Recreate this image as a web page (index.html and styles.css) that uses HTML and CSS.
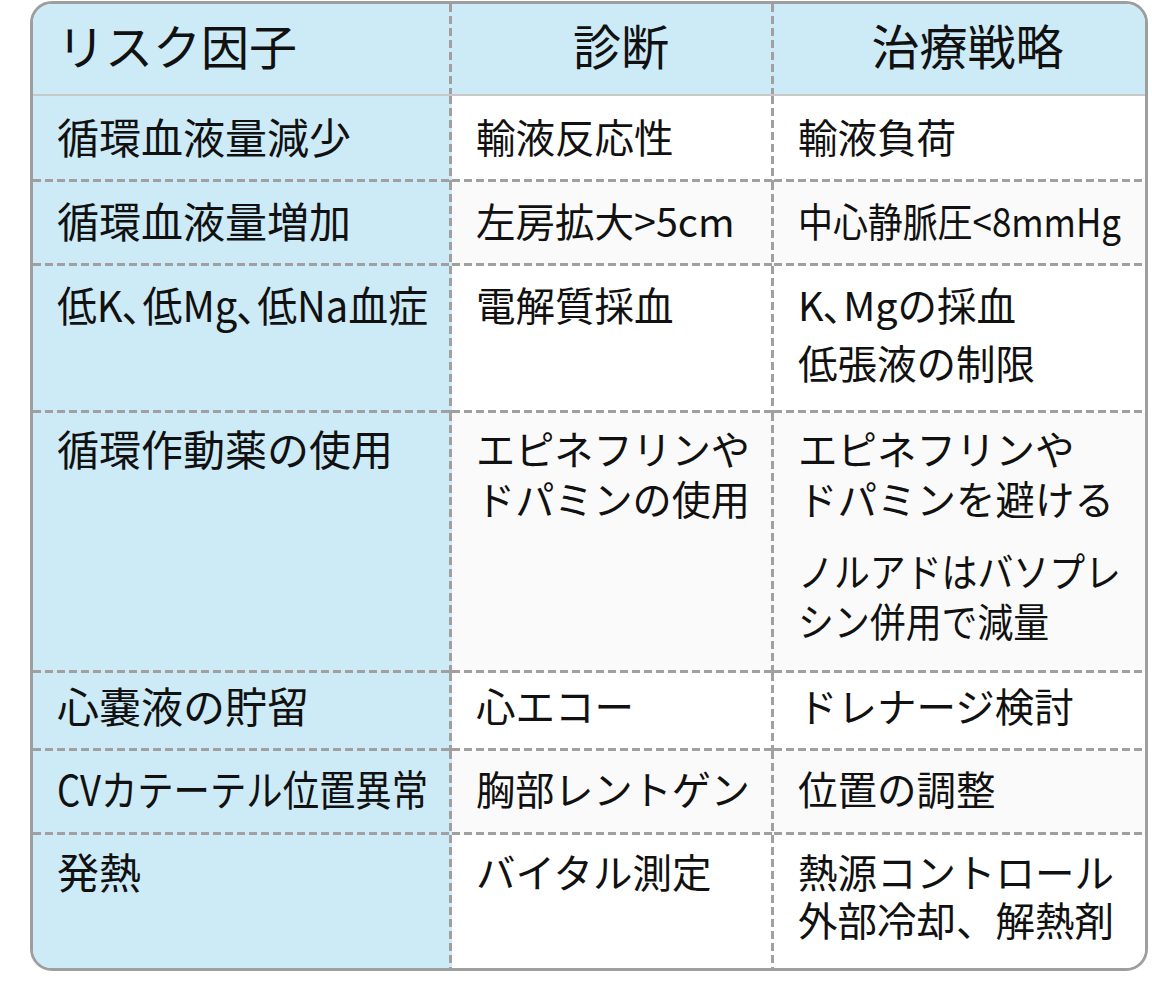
FILE: index.html
```html
<!DOCTYPE html>
<html lang="ja">
<head>
<meta charset="utf-8">
<title>リスク因子</title>
<link rel="stylesheet" href="styles.css">
</head>
<body>
<div class="grid" role="table">
  <div class="row head" role="row">
    <div class="cell c1"><p>リスク因子</p></div>
    <div class="cell c2"><p>診断</p></div>
    <div class="cell c3"><p>治療戦略</p></div>
  </div>
  <div class="row body r1" role="row">
    <div class="cell c1"><p><span class="line">循環血液量減少</span></p></div>
    <div class="cell c2"><p><span class="line">輸液反応性</span></p></div>
    <div class="cell c3"><p><span class="line">輸液負荷</span></p></div>
  </div>
  <div class="row body r2 alt" role="row">
    <div class="cell c1"><p><span class="line">循環血液量増加</span></p></div>
    <div class="cell c2"><p><span class="line">左房拡大&gt;5cm</span></p></div>
    <div class="cell c3"><p><span class="line">中心静脈圧&lt;8mmHg</span></p></div>
  </div>
  <div class="row body r3" role="row">
    <div class="cell c1"><p><span class="line">低K､低Mg､低Na血症</span></p></div>
    <div class="cell c2"><p><span class="line">電解質採血</span></p></div>
    <div class="cell c3"><p><span class="line">K､Mgの採血</span></p><p class="next"><span class="line">低張液の制限</span></p></div>
  </div>
  <div class="row body r4 alt" role="row">
    <div class="cell c1"><p><span class="line">循環作動薬の使用</span></p></div>
    <div class="cell c2"><p><span class="line">エピネフリンや</span><span class="line">ドパミンの使用</span></p></div>
    <div class="cell c3"><p><span class="line">エピネフリンや</span><span class="line">ドパミンを避ける</span></p><p class="next"><span class="line">ノルアドはバソプレ</span><span class="line">シン併用で減量</span></p></div>
  </div>
  <div class="row body r5" role="row">
    <div class="cell c1"><p><span class="line">心嚢液の貯留</span></p></div>
    <div class="cell c2"><p><span class="line">心エコー</span></p></div>
    <div class="cell c3"><p><span class="line">ドレナージ検討</span></p></div>
  </div>
  <div class="row body r6 alt" role="row">
    <div class="cell c1"><p><span class="line">CVカテーテル位置異常</span></p></div>
    <div class="cell c2"><p><span class="line">胸部レントゲン</span></p></div>
    <div class="cell c3"><p><span class="line">位置の調整</span></p></div>
  </div>
  <div class="row body r7" role="row">
    <div class="cell c1"><p><span class="line">発熱</span></p></div>
    <div class="cell c2"><p><span class="line">バイタル測定</span></p></div>
    <div class="cell c3"><p><span class="line">熱源コントロール</span><span class="line">外部冷却、解熱剤</span></p></div>
  </div>
</div>
<script src="fit.js"></script>
</body>
</html>
```

FILE: fit.js
```js
(function () {
  function fit() {
    document.querySelectorAll('.cell p').forEach(function (p) {
      var lines = p.querySelectorAll('.line');
      if (!lines.length) return;
      var cell = p.closest('.cell');
      var cs = getComputedStyle(cell);
      var max = cell.clientWidth - parseFloat(cs.paddingLeft) - parseFloat(cs.paddingRight);
      var widest = 0;
      lines.forEach(function (l) {
        l.style.transform = '';
        widest = Math.max(widest, l.getBoundingClientRect().width);
      });
      if (widest > max) {
        var s = max / widest;
        lines.forEach(function (l) {
          l.style.transform = 'scaleX(' + s.toFixed(4) + ')';
        });
      }
    });
  }
  fit();
  if (document.fonts && document.fonts.ready) {
    document.fonts.ready.then(fit);
  }
})();
```

FILE: styles.css
```css
html, body {
  margin: 0;
  background: #ffffff;
}

body {
  padding: 1px 0 0 30px;
  font-family: "Noto Sans CJK JP", "Noto Sans", sans-serif;
  color: #111111;
}

.grid {
  width: 1118px;
  box-sizing: border-box;
  border: 3px solid #9e9e9e;
  border-radius: 22px;
  overflow: hidden;
  display: grid;
  grid-template-columns: 419px 322px 371px;
  grid-template-rows: 92px 86px 84px 147px 260px 78px 84px 133px;
}

.row {
  display: contents;
}

.cell {
  --bg: #ffffff;
  --bd-r: none;
  --bd-b: none;
  box-sizing: border-box;
  padding: 0 24px;
  font-size: 39.5px;
  line-height: 50px;
  white-space: nowrap;
  background: var(--bd-b), var(--bd-r), var(--bg);
}

.cell p {
  margin: 0;
}

.line {
  display: block;
  width: max-content;
  transform-origin: 0 50%;
}

.c1,
.c2 {
  --bd-r: linear-gradient(#a0a0a0 8px, transparent 8px) right top / 3px 12px repeat-y;
}

.c1 {
  --bg: #cdeaf7;
  font-size: 42px;
}

.alt .c2,
.alt .c3 {
  --bg: #fafafa;
}

.body .cell {
  --bd-b: linear-gradient(90deg, #a0a0a0 8px, transparent 8px) left bottom / 12px 3px repeat-x;
}

.r7 .cell {
  --bd-b: none;
}

.head .cell {
  --bg: #cdeaf7;
  border-bottom: 2px solid #c8c8c8;
  font-size: 48px;
  line-height: 56px;
  padding: 12px 8px 0 24px;
  text-align: center;
}

.head .c1 {
  text-align: left;
}

.r1 .cell { padding-top: 15px; }
.r2 .cell { padding-top: 13px; }
.r3 .cell { padding-top: 13px; }
.r4 .cell { padding-top: 10px; }
.r5 .cell { padding-top: 7px; }
.r6 .cell { padding-top: 12px; }
.r7 .cell { padding-top: 12px; line-height: 48px; }

.r3 .next {
  margin-top: 8px;
}

.r4 .next {
  margin-top: 22px;
}
```
